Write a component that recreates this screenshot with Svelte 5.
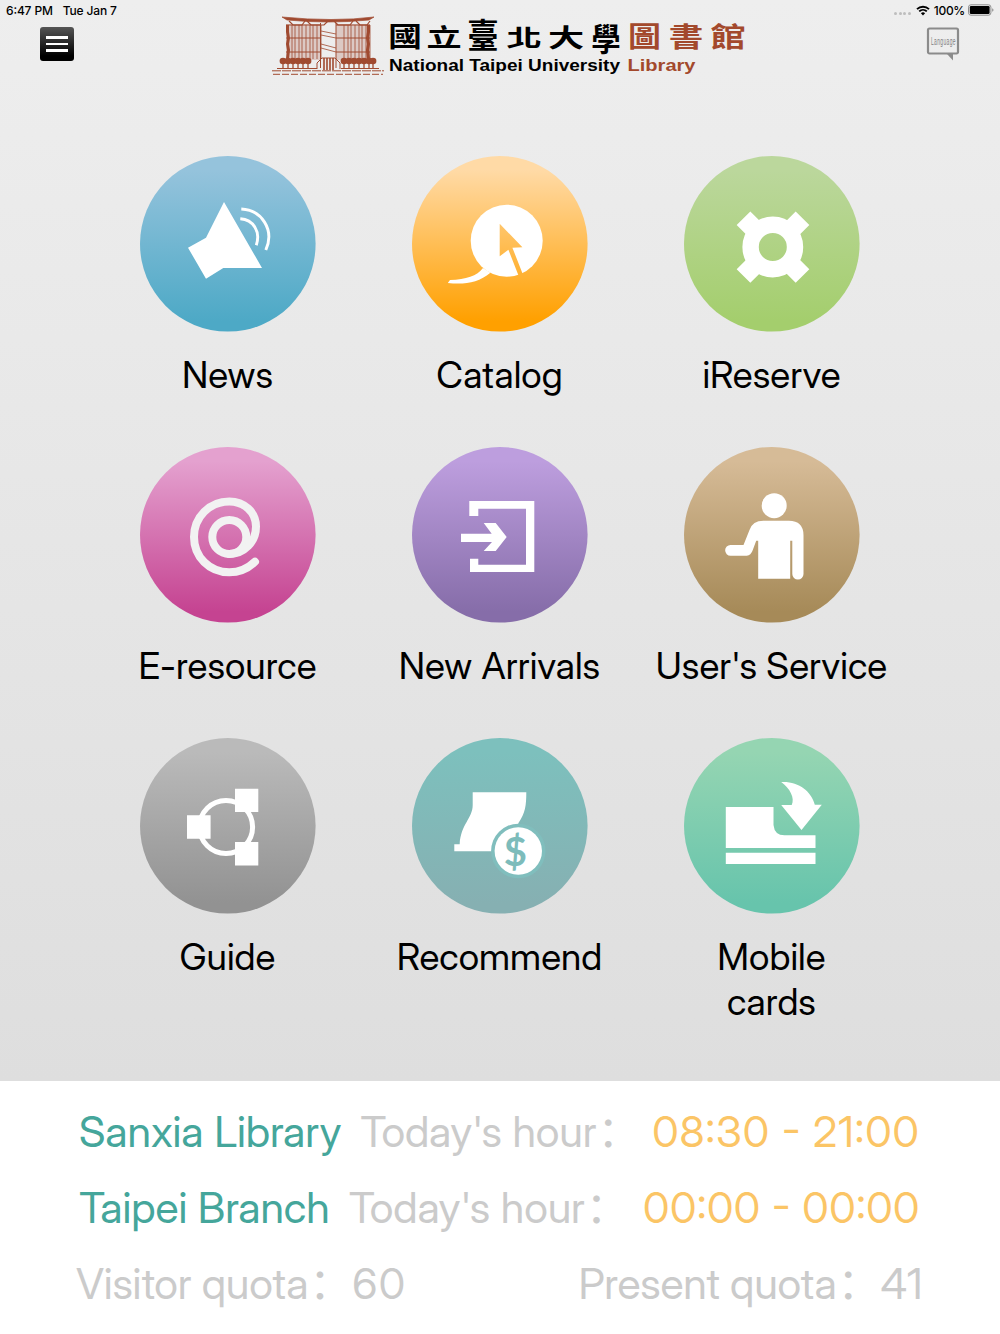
<script>
  // Menu entries in reading order, three per row
  const items = [
    { id: 'news', label: ['News'], top: '#95c3dc', bottom: '#4da9c6' },
    { id: 'catalog', label: ['Catalog'], top: '#ffdaa6', bottom: '#ffa000' },
    { id: 'reserve', label: ['iReserve'], top: '#bbd79c', bottom: '#a4ce6d' },
    { id: 'resource', label: ['E-resource'], top: '#e4a1cf', bottom: '#c54391' },
    { id: 'arrivals', label: ['New Arrivals'], top: '#bd9ede', bottom: '#866da9' },
    { id: 'service', label: ["User's Service"], top: '#d6bb97', bottom: '#a68a58' },
    { id: 'guide', label: ['Guide'], top: '#bababa', bottom: '#929292' },
    { id: 'recommend', label: ['Recommend'], top: '#7dc0bd', bottom: '#86b0b2' },
    { id: 'cards', label: ['Mobile', 'cards'], top: '#95d5b2', bottom: '#67c4ac' },
  ];

  const hours = [
    { name: 'Sanxia Library', time: '08:30 - 21:00', spacing: 1 },
    { name: 'Taipei Branch', time: '00:00 - 00:00', spacing: 0.55 },
  ];

  // x is the centre of each character, sx / sy flatten it to the clerical look
  const title = [
    { ch: '國', x: 405, y: 32, sx: 1.05, sy: 0.88 },
    { ch: '立', x: 444, y: 31, sx: 1.1, sy: 0.76 },
    { ch: '臺', x: 483, y: 33, sx: 0.98, sy: 1.06 },
    { ch: '北', x: 524, y: 31, sx: 1.1, sy: 0.72 },
    { ch: '大', x: 566, y: 31.5, sx: 1.13, sy: 0.78 },
    { ch: '學', x: 606, y: 36, sx: 0.92, sy: 1 },
    { ch: '圖', x: 644.5, y: 32, sx: 1.03, sy: 0.9, red: true },
    { ch: '書', x: 686, y: 31.5, sx: 1.08, sy: 0.84, red: true },
    { ch: '館', x: 728, y: 31.5, sx: 1.1, sy: 0.86, red: true },
  ];

  // vertical bars of the building facade
  const bars = [28, 31, 35, 38, 42, 46, 49, 53, 57, 80, 84, 87, 91, 95, 98, 102, 106];
  const trees = [12, 17, 22, 27, 32, 37, 73, 78, 83, 88, 93, 98, 102];
</script>

<div class="screen">
  <div class="status">
    <span>6:47 PM</span>
    <span class="date">Tue Jan 7</span>
    <div class="status-right">
      <span class="dots"><i></i><i></i><i></i><i></i></span>
      <svg width="14" height="11" viewBox="0 0 14 11">
        <path d="M1 4.1a8.7 8.7 0 0 1 12 0M3.2 6.4a5.5 5.5 0 0 1 7.6 0" fill="none" stroke="#000" stroke-width="1.9" />
        <path d="M7 10.4 4.9 8.2a3.1 3.1 0 0 1 4.2 0z" />
      </svg>
      <span class="percent">100%</span>
      <svg width="26" height="12" viewBox="0 0 26 12">
        <rect x=".5" y=".8" width="22.4" height="10.4" rx="2.4" fill="none" stroke="#8f8f8f" />
        <rect x="1.8" y="2" width="19.8" height="8" rx="1.2" />
        <path d="M24.2 4.2v3.6q1.3-.5 1.3-1.8t-1.3-1.8z" fill="#8f8f8f" />
      </svg>
    </div>
  </div>

  <header>
    <button class="menu" aria-label="Menu"><i></i><i></i><i></i></button>

    <svg class="logo" width="480" height="86" viewBox="0 -12 480 86">
      <g stroke="#a04a30" fill="none" transform="translate(0 1)">
        <path d="M10 1q52 5 92 0l-5 3q-40 4-82 0z" fill="#a04a30" stroke-width=".7" />
        <path d="M17 5l4 4h9l3-4M35 5l4 4h13l4-4M62 5l4 4h12l3-4M84 5l4 4h7l3-4" stroke-width="1.2" />
        <path d="M14 8h34v36H14zM64 8h34v36H64z" fill="#a04a30" fill-opacity=".22" stroke="none" />
        <path d="M14 9h34M64 9h34M14 22h34M14 36h34M64 22h34M64 36h34" />
        <path d="M15.5 9v7l1 6-1 6 1 6-1 9M96.5 9v7l-1 6 1 6-1 6 1 9" stroke-width="3" />
        {#each bars as x}
          <path d="M{x - 8} 9v34" stroke-width=".8" />
        {/each}
        <path d="M49 15l15 3M49 19l15 3M49 28l15 4M49 32l15 4" stroke-width=".8" />
        <path d="M48.5 7v45M64 7v45" />
        <path d="M45 53V47l5-5h13l5 5v6" />
        <path d="M52 42v12M55 42v12M58 42v12M61 42v12" stroke-width="1.6" />
        {#each trees as x}
          <ellipse cx={x - 1} cy="45" rx="3.4" ry="3.3" fill="#a04a30" stroke="none" />
          <path d="M{x - 1} 47v6" stroke-width="1.3" />
        {/each}
        <path d="M5 52.5h40M69 52.5h38" stroke-width="1.2" />
        <path d="M0 54.8h112" stroke-dasharray="9 1" />
        <path d="M1 58.3h110" stroke-dasharray="7 2" />
      </g>
      {#each title as t}
        <text class="cjk" class:red={t.red} transform="translate({t.x - 272} {t.y}) scale({t.sx} {t.sy})">{t.ch}</text>
      {/each}
      <text class="en" x="117" y="56" textLength="231" lengthAdjust="spacingAndGlyphs">National Taipei University</text>
      <text class="en red" x="355.5" y="56" textLength="68" lengthAdjust="spacingAndGlyphs">Library</text>
    </svg>

    <svg class="language" width="34" height="35" viewBox="0 0 34 35">
      <path d="M3.5 1.5h27a1.5 1.5 0 0 1 1.5 1.5v22a1.5 1.5 0 0 1-1.5 1.5h-27A1.5 1.5 0 0 1 2 25V3a1.5 1.5 0 0 1 1.5-1.5z" fill="none" stroke="#8b8b8b" stroke-width="2.2" />
      <path d="M21 27h6v6.6z" fill="#8b8b8b" />
      <text transform="translate(5 17.5) scale(.47 1)">Language</text>
    </svg>
  </header>

  <main>
    {#each items as item}
      <div class="item">
        <svg width="176" height="176" viewBox="0 0 176 176">
          <defs>
            <linearGradient id="bg-{item.id}" x1="0" y1="0" x2="0" y2="1">
              <stop offset="0.08" stop-color={item.top} />
              <stop offset="0.94" stop-color={item.bottom} />
            </linearGradient>
          </defs>
          <circle cx="87.8" cy="87.8" r="87.8" fill="url(#bg-{item.id})" />
          {#if item.id === 'news'}
            <path d="M84 46 122 112H83.3L66 122.8 48 91.7l18-10z" fill="#fff" />
            <path d="M100.3 62.8c13 1 20.6 12.5 16 26.4M101.3 53c20 .8 33.7 20.5 24.5 41" fill="none" stroke="#fff" stroke-width="2.9" />
          {:else if item.id === 'catalog'}
            <mask id="pointer">
              <rect width="176" height="176" fill="#fff" />
              <path d="M87.7 67.7l22.7 23.6-10 .4 10.6 27-4.2 1.5-10.4-26.5-8.7 6.6z" fill="#000" />
            </mask>
            <circle cx="94.7" cy="84.7" r="36" fill="#fff" mask="url(#pointer)" />
            <path d="M71 112c-6 8-17 11.5-33 12l-2.2 3c17 1.8 30.5-.3 42.6-10.3z" fill="#fff" />
          {:else if item.id === 'reserve'}
            <circle cx="88.8" cy="91" r="22.2" fill="none" stroke="#fff" stroke-width="16.4" />
            <path d="M59.5 62.2 74 76.7M118.5 62.2 104 76.7M59.5 120 74 105.5M118.5 120 104 105.5" stroke="#fff" stroke-width="19.3" />
          {:else if item.id === 'resource'}
            <g fill="none" stroke="#f2f2f2" stroke-width="8" stroke-linecap="round">
              <circle cx="89.3" cy="90" r="17" />
              <path d="M115 114.7c-7 6.8-16 10.6-25.7 10.6C69.5 125.3 54 110 54 90s15.5-35.5 35.3-35.5C104 54.5 116 65 116 79.5c0 15.5-12 27.5-26.7 27.5" />
            </g>
          {:else if item.id === 'arrivals'}
            <path d="M57.3 54h65v71H58v-13.3h8.3v6H114v-56H66.3V69h-9z" fill="#fff" />
            <path d="M49 86.7h30.7L71.7 76h12l11 14-11 14h-12l8.3-9H49z" fill="#fff" />
          {:else if item.id === 'service'}
            <circle cx="90.2" cy="58.7" r="12.5" fill="#fff" />
            <path d="M79.5 73.7h25.3q14.7 0 14.7 14.6V127a5.6 5.6 0 0 1-11.2 0V93.7h-2.1v38h-32v-38h-2L68.8 103q-2 5.7-6 5.7H46.5a5.3 5.3 0 0 1 0-10.7h13l6-15q3-9.3 14-9.3z" fill="#fff" />
          {:else if item.id === 'guide'}
            <circle cx="86" cy="89" r="26.6" fill="none" stroke="#fff" stroke-width="5" />
            <path d="M47 77.3h23.6v23.4H47zM95 50.7h23.3V74H95zM95 104h23.3v23.5H95z" fill="#fff" />
          {:else if item.id === 'recommend'}
            <path d="M60.7 54.3h53.6c0 13-1 21-8 31v28H42.3v-7h5.4c1-20 13-26 13-39.3z" fill="#fff" />
            <circle cx="106.3" cy="113" r="27.2" fill="#80bebd" />
            <circle cx="106.3" cy="113" r="23.7" fill="#fff" />
            <text class="dollar" x="103.3" y="127.5">$</text>
          {:else}
            <path d="M41.8 69h47.7v18q1 10.3 11 10.3h31V110H41.8zM41.8 114.7h89.7V126H41.8z" fill="#fff" />
            <path d="M97.2 44c17-1 30 9 33.6 22.7h7L117.5 92 97.2 67h10.5c3.5-7-2-17-10.5-23z" fill="#fff" />
          {/if}
        </svg>
        <div class="label">
          {#each item.label as line}
            <div>{line}</div>
          {/each}
        </div>
      </div>
    {/each}
  </main>

  <footer>
    {#each hours as h}
      <div class="row">
        <span class="name">{h.name}</span>
        <span class="today">Today's hour<b>：</b></span>
        <span class="time" style="letter-spacing: {h.spacing}px">{h.time}</span>
      </div>
    {/each}
    <div class="row quota">
      <span>Visitor quota<b>：</b><span class="count">60</span></span>
      <span>Present quota<b>：</b><span class="count">41</span></span>
    </div>
  </footer>
</div>

<style>
  :global(body) {
    margin: 0;
  }

  .screen {
    width: 1000px;
    height: 1334px;
    display: flex;
    flex-direction: column;
    overflow: hidden;
    background: linear-gradient(#eeeeee, #dedede 1081px);
    font-family: 'Inter Display', Inter, 'Noto Sans CJK SC', sans-serif;
    font-feature-settings: 'calt' 1;
    color: #000;
  }

  .status {
    height: 20px;
    box-sizing: border-box;
    padding: 0 6px;
    display: flex;
    align-items: center;
    font-family: Inter, sans-serif;
    font-size: 12px;
    font-weight: 500;
    letter-spacing: -0.15px;
  }

  .date {
    margin-left: 10px;
  }

  .status-right {
    margin-left: auto;
    display: flex;
    align-items: center;
  }

  .dots {
    display: flex;
    gap: 1.5px;
    margin: 7px 5px 0 0;
  }

  .dots i {
    width: 3px;
    height: 3px;
    border-radius: 50%;
    background: #bdbdbd;
  }

  .percent {
    margin: 0 3px 0 4px;
    letter-spacing: -0.3px;
  }

  header {
    height: 136px;
    box-sizing: border-box;
    padding: 0 40px;
    display: flex;
    align-items: flex-start;
    justify-content: space-between;
  }

  .menu {
    width: 34px;
    height: 34px;
    margin: 7px 0 0;
    padding: 0 6px;
    border: 0;
    border-radius: 3px;
    background: linear-gradient(#555, #000 85%);
    display: flex;
    flex-direction: column;
    justify-content: center;
    gap: 4px;
  }

  .menu i {
    height: 2.7px;
    background: #fff;
  }

  .logo {
    margin: -17px 0 0 24px;
  }

  .cjk {
    font: 700 32px 'Noto Sans CJK TC', sans-serif;
    text-anchor: middle;
  }

  .en {
    font: bold 17px 'Liberation Sans', sans-serif;
  }

  .red {
    fill: #a3492c;
  }

  .language {
    margin: 7px 0 0;
  }

  .language text {
    font: 10.5px 'Liberation Sans', sans-serif;
    letter-spacing: 0.8px;
    fill: #7d7d7d;
  }

  main {
    height: 925px;
    padding: 0 92px;
    display: grid;
    grid-template-columns: repeat(3, 272px);
    grid-auto-rows: 291px;
  }

  .item {
    display: flex;
    flex-direction: column;
    align-items: center;
  }

  .label {
    margin-top: 20px;
    padding-right: 1px;
    font-size: 37px;
    line-height: 45px;
    letter-spacing: 0.05px;
    text-align: center;
    white-space: nowrap;
  }

  .dollar {
    font: bold 40px Lato, sans-serif;
    text-anchor: middle;
    fill: #7dbcbb;
  }

  footer {
    flex: 1;
    padding-top: 12px;
    background: #fff;
    font-size: 43px;
    letter-spacing: -0.1px;
  }

  .row {
    height: 76px;
    padding: 0 80px 0 79px;
    display: flex;
    align-items: center;
    white-space: nowrap;
  }

  .row b {
    margin-left: 1px;
    font-family: 'Noto Sans CJK SC', sans-serif;
    font-weight: 400;
    line-height: 1;
    letter-spacing: 0;
  }

  .name {
    color: #45a69b;
  }

  .today {
    margin-left: 19px;
    color: #cbcbcb;
  }

  .time {
    margin-left: auto;
    color: #fbc566;
  }

  .count {
    letter-spacing: 1.5px;
  }

  .quota {
    padding: 0 76px;
    justify-content: space-between;
    color: #cbcbcb;
    letter-spacing: -0.25px;
  }
</style>
